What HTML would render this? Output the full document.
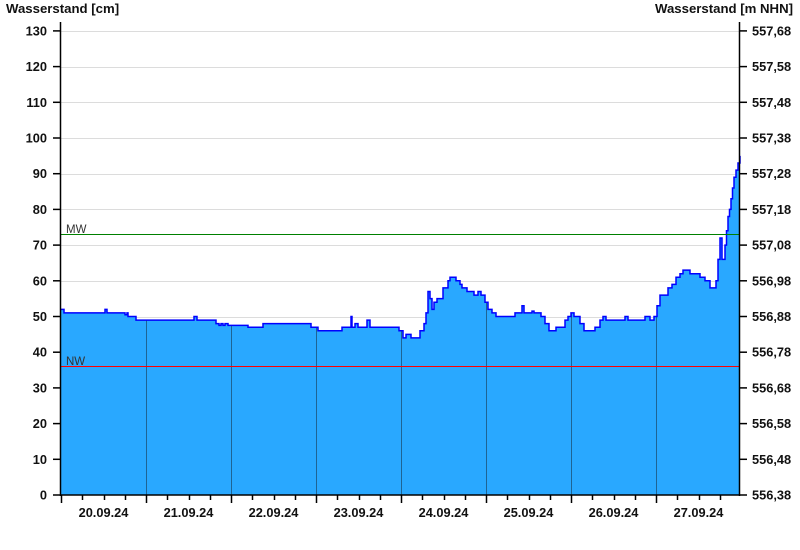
<!DOCTYPE html>
<html><head><meta charset="utf-8"><style>
html,body{margin:0;padding:0;background:#fff;}
svg{display:block;font-family:"Liberation Sans",sans-serif;}
</style></head><body>
<svg id="c" width="800" height="550" xmlns="http://www.w3.org/2000/svg">
<defs><clipPath id="cp"><path id="cpath"/></clipPath></defs>
<g id="grid"></g>
<path id="area" fill="#29a8ff" stroke="none"/>
<g id="days" clip-path="url(#cp)"></g>
<path id="line" fill="none" stroke="#0000ff" stroke-width="1.5"/>
<line x1="61" y1="234.5" x2="740" y2="234.5" stroke="#008000" stroke-width="1"/>
<line x1="61" y1="366.5" x2="740" y2="366.5" stroke="#ff0000" stroke-width="1"/>
<text x="66" y="233" font-size="11.5" fill="#333">MW</text>
<text x="66" y="365" font-size="11.5" fill="#333">NW</text>
<g id="axes" stroke="#000" stroke-width="1.5"></g>
<g id="labels" font-size="12.8" font-weight="bold" fill="#111"></g>
<text x="6" y="13" font-size="13.2" font-weight="bold" fill="#111">Wasserstand [cm]</text>
<text x="793" y="13" font-size="13.2" font-weight="bold" fill="#111" text-anchor="end">Wasserstand [m NHN]</text>
</svg>
<script>
var ns="http://www.w3.org/2000/svg";
function Y(v){return 495-v*3.57;}
function el(p,t,a,txt){var e=document.createElementNS(ns,t);for(var k in a)e.setAttribute(k,a[k]);if(txt!==undefined)e.textContent=txt;document.getElementById(p).appendChild(e);return e;}
for(var v=10;v<=130;v+=10){var y=Math.round(Y(v))+0.5;el("grid","line",{x1:61,x2:740,y1:y,y2:y,stroke:"#dcdcdc","stroke-width":1});}
var pts=[[60,52],[62,52],[64,51],[104,51],[105,52],[107,51],[124,51],[125,50.5],[127,51],[128,50],[135,50],[136,49],[193,49],[194,50],[197,49],[215,49],[216,48],[218,48],[219,47.5],[221,48],[223,47.5],[225,48],[226,48],[228,47.5],[248,47],[262,47],[263,48],[310,48],[311,47],[318,46],[340,46],[342,47],[350,47],[351,50],[352,47],[355,48],[358,47],[366,47],[367,49],[370,47],[395,47],[399,46],[403,44],[406,45],[409,45],[411,44],[415,44],[420,46],[424,48],[426,51],[428,57],[430,55],[432,52],[434,54],[437,55],[440,55],[443,58],[448,60],[450,61],[453,61],[456,60],[460,59],[462,58],[465,58],[467,57],[470,57],[474,56],[476,56],[478,57],[481,56],[485,54],[488,52],[492,51],[496,50],[500,50],[503,50],[510,50],[515,51],[520,51],[522,53],[524,51],[530,51],[532,51.5],[534,51],[536,51],[541,50],[545,48],[549,46],[553,46],[556,47],[560,47],[565,49],[568,50],[571,51],[574,50],[577,50],[580,48],[584,46],[590,46],[595,47],[600,49],[603,50],[606,49],[620,49],[625,50],[628,49],[640,49],[645,50],[650,49],[654,50],[657,53],[660,56],[664,56],[668,58],[672,59],[676,61],[680,62],[683,63],[690,62],[696,62],[700,61],[705,60],[710,58],[713,58],[716,60],[718,66],[720,72],[722,66],[725,70],[726.5,74],[728,78],[729.5,80],[731,83],[732.5,86],[734,89],[736,91],[738,93],[740,95]];
var d="M"+pts[0][0]+","+Y(pts[0][1]).toFixed(1);
for(var i=1;i<pts.length;i++){d+=" H"+pts[i][0]+" V"+Y(pts[i][1]).toFixed(1);}
document.getElementById("line").setAttribute("d",d);
var ad=d+" V495 H61 V"+Y(pts[0][1]).toFixed(1)+" Z";
document.getElementById("area").setAttribute("d",ad);
document.getElementById("cpath").setAttribute("d",ad);
var days=[146,231,316,401,486,571,656];
days.forEach(function(x){el("days","line",{x1:x+0.5,x2:x+0.5,y1:200,y2:495,stroke:"#1e6494","stroke-width":1});});
el("axes","line",{x1:60.5,x2:60.5,y1:22,y2:496});
el("axes","line",{x1:739.5,x2:739.5,y1:22,y2:496});
el("axes","line",{x1:60,x2:740,y1:495,y2:495});
var rl=["556,38","556,48","556,58","556,68","556,78","556,88","556,98","557,08","557,18","557,28","557,38","557,48","557,58","557,68"];
for(var i=0;i<=13;i++){var y=Y(i*10);
el("axes","line",{x1:53,x2:60,y1:y,y2:y});
el("axes","line",{x1:740,x2:747,y1:y,y2:y});
el("labels","text",{x:47,y:y+4.5,"text-anchor":"end"},String(i*10));
el("labels","text",{x:752,y:y+4.5},rl[i]);}
for(var x=61;x<740;x+=21.25){var big=Math.abs(((x-61)/85)-Math.round((x-61)/85))<0.01;
el("axes","line",{x1:Math.round(x)+0.5,x2:Math.round(x)+0.5,y1:495,y2:big?503:500});}
var dl=["20.09.24","21.09.24","22.09.24","23.09.24","24.09.24","25.09.24","26.09.24","27.09.24"];
dl.forEach(function(t,i){el("labels","text",{x:103.5+i*85,y:517,"text-anchor":"middle"},t);});
</script>
</body></html>
